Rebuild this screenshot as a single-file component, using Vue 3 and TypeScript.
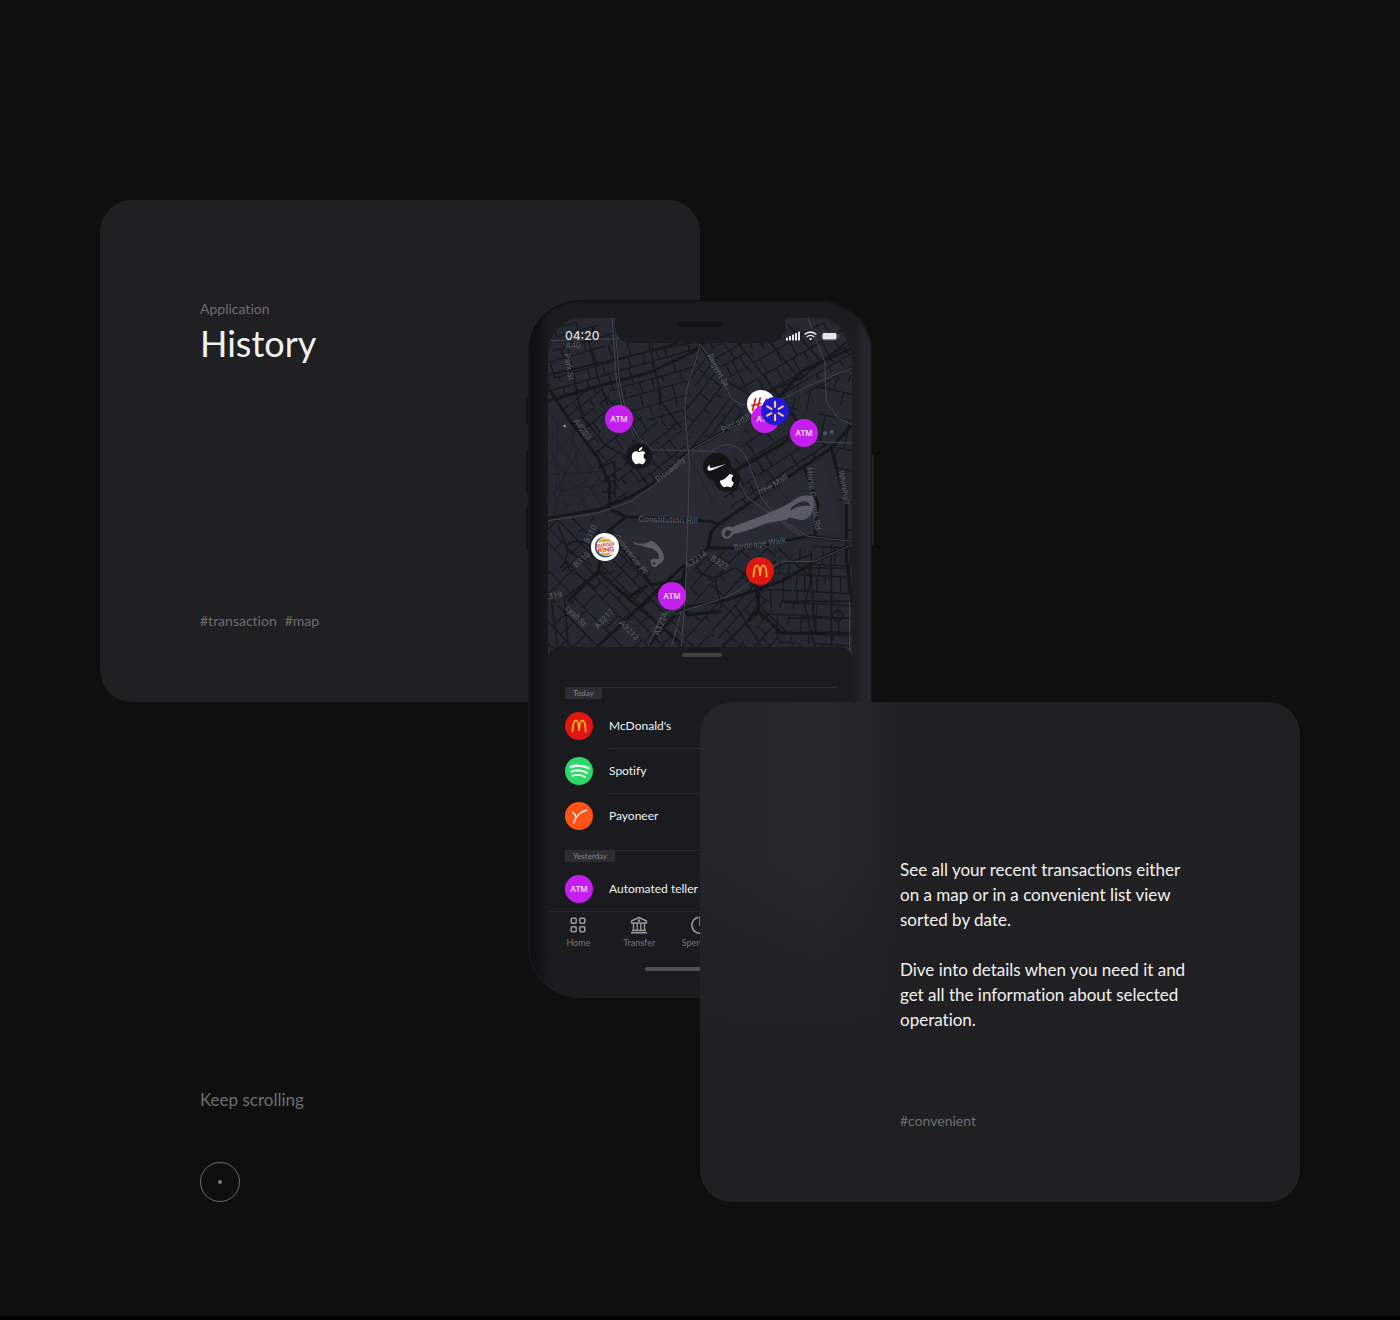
<script setup lang="ts">
interface District {
  id: string
  outline: string
  cx: number
  cy: number
  angle: number
  half: number
  row: number
  block: number
  seed: number
}

interface StreetLabel {
  text: string
  x: number
  y: number
  angle: number
}

interface Pin {
  logo: string
  name: string
  x: number
  y: number
}

interface Group {
  day: string
  items: { logo: string; name: string }[]
}

const districts: District[] = [
  { id: 'mayfair-north', outline: '0,0 460,60 430,160 400,330 220,290 150,200 0,250', cx: 220, cy: 160, angle: -16, half: 300, row: 38, block: 62, seed: 7 },
  { id: 'mayfair-south', outline: '10,250 150,200 230,280 400,330 420,400 300,510 190,570 160,450 90,340', cx: 250, cy: 390, angle: -38, half: 260, row: 36, block: 56, seed: 23 },
  { id: 'mayfair-east', outline: '450,90 560,250 600,300 420,395 405,300 412,200', cx: 500, cy: 260, angle: -52, half: 220, row: 38, block: 70, seed: 41 },
  { id: 'soho', outline: '460,75 912,0 912,170 850,200 700,250 600,250', cx: 690, cy: 140, angle: -30, half: 300, row: 36, block: 50, seed: 59 },
  { id: 'st-james', outline: '600,310 700,250 850,390 560,590 500,500 560,420', cx: 690, cy: 390, angle: -33, half: 240, row: 56, block: 70, seed: 71 },
  { id: 'strand', outline: '700,250 850,190 912,170 912,660 880,600 850,390', cx: 830, cy: 350, angle: 12, half: 340, row: 76, block: 90, seed: 83 },
  { id: 'belgravia', outline: '0,610 130,590 210,640 330,790 400,860 400,990 0,990', cx: 190, cy: 800, angle: 46, half: 320, row: 42, block: 74, seed: 97 },
  { id: 'victoria', outline: '440,740 500,700 690,690 650,880 720,990 410,990 415,880', cx: 550, cy: 850, angle: -48, half: 260, row: 40, block: 76, seed: 113 },
  { id: 'westminster', outline: '680,700 912,670 912,990 700,990 640,860', cx: 790, cy: 840, angle: 3, half: 220, row: 40, block: 54, seed: 131 },
]

/** Seeded generator, so the city always has the same streets. */
function random(seed: number): () => number {
  let state = seed * 2654435761 % 4294967296
  return () => {
    state = (state * 1664525 + 1013904223) % 4294967296
    return state / 4294967296
  }
}

/** Rows of streets with staggered side streets between them. */
function streets(d: District): string {
  const next = random(d.seed)
  const left = d.cx - d.half
  const right = d.cx + d.half
  let path = ''
  let y = d.cy - d.half
  while (y < d.cy + d.half) {
    const depth = d.row * (0.6 + next() * 0.8)
    const gap = next() * d.half
    path += `M${left} ${y.toFixed(1)}H${(left + gap).toFixed(1)}m${(d.block * next()).toFixed(1)} 0H${right}`
    let x = left
    while (x < right) {
      x += d.block * (0.4 + next())
      const reach = next() > 0.25 ? depth : depth * 0.5
      path += `M${x.toFixed(1)} ${y.toFixed(1)}l${(next() * 6 - 3).toFixed(1)} ${reach.toFixed(1)}`
    }
    y += depth
  }
  return path
}

const network = districts.map((d) => ({ ...d, path: streets(d) }))

const labels: StreetLabel[] = [
  { text: 'A40', x: 75, y: 82, angle: -4 },
  { text: 'Park St', x: 64, y: 146, angle: 80 },
  { text: 'A4202', x: 104, y: 334, angle: 55 },
  { text: 'Regent St', x: 510, y: 156, angle: 62 },
  { text: 'Piccadilly', x: 568, y: 312, angle: -27 },
  { text: 'Piccadilly', x: 366, y: 454, angle: -38 },
  { text: 'The Mall', x: 676, y: 500, angle: -32 },
  { text: 'Horse Guards Rd', x: 797, y: 542, angle: 82 },
  { text: 'Whitehall', x: 888, y: 508, angle: 80 },
  { text: 'Constitution Hill', x: 361, y: 605, angle: 2 },
  { text: 'Birdcage Walk', x: 636, y: 677, angle: -8 },
  { text: 'B310', x: 127, y: 648, angle: -62 },
  { text: 'B310', x: 100, y: 724, angle: -42 },
  { text: 'Grosvenor Pl', x: 248, y: 708, angle: 52 },
  { text: 'A3214', x: 444, y: 724, angle: -35 },
  { text: 'B323', x: 515, y: 734, angle: 32 },
  { text: '319', x: 22, y: 832, angle: -8 },
  { text: 'Lyall St', x: 84, y: 894, angle: 46 },
  { text: 'A3217', x: 168, y: 902, angle: -46 },
  { text: 'A3213', x: 244, y: 936, angle: 46 },
  { text: 'A3214', x: 338, y: 918, angle: -68 },
]

const pins: Pin[] = [
  { logo: 'atm', name: 'ATM', x: 71, y: 101 },
  { logo: 'apple', name: 'Apple', x: 91, y: 138 },
  { logo: 'hm', name: 'H&M', x: 213, y: 86 },
  { logo: 'atm', name: 'ATM', x: 217, y: 101 },
  { logo: 'walmart', name: 'Walmart', x: 227, y: 93 },
  { logo: 'atm', name: 'ATM', x: 256, y: 115 },
  { logo: 'apple', name: 'Apple', x: 179, y: 161 },
  { logo: 'nike', name: 'Nike', x: 169, y: 149 },
  { logo: 'burger-king', name: 'Burger King', x: 57, y: 229 },
  { logo: 'mcdonalds', name: "McDonald's", x: 212, y: 253 },
  { logo: 'atm', name: 'ATM', x: 124, y: 278 },
]

const groups: Group[] = [
  {
    day: 'Today',
    items: [
      { logo: 'mcdonalds', name: "McDonald's" },
      { logo: 'spotify', name: 'Spotify' },
      { logo: 'payoneer', name: 'Payoneer' },
    ],
  },
  { day: 'Yesterday', items: [{ logo: 'atm', name: 'Automated teller' }] },
]

const tabs = [
  { icon: 'home', name: 'Home' },
  { icon: 'transfer', name: 'Transfer' },
  { icon: 'spending', name: 'Spending' },
]
</script>

<template>
  <svg class="sprite" aria-hidden="true">
    <symbol id="atm" viewBox="0 0 28 28">
      <circle cx="14" cy="14" r="14" fill="#c51ff0" />
      <text x="14" y="17" text-anchor="middle" font-family="Open Sans, sans-serif" font-size="8" font-weight="600" fill="#fbe6ff">ATM</text>
    </symbol>
    <symbol id="apple" viewBox="0 0 28 28">
      <circle cx="14" cy="14" r="13" fill="#141618" />
      <path
        transform="translate(5.2 5) scale(.72)"
        fill="#fff"
        d="M12.152 6.896c-.948 0-2.415-1.078-3.96-1.04-2.04.027-3.91 1.183-4.961 3.014-2.117 3.675-.546 9.103 1.519 12.09 1.013 1.454 2.208 3.09 3.792 3.039 1.52-.065 2.09-.987 3.935-.987 1.831 0 2.35.987 3.96.948 1.637-.026 2.676-1.48 3.676-2.948 1.156-1.688 1.636-3.325 1.662-3.415-.039-.013-3.182-1.221-3.22-4.857-.026-3.04 2.48-4.494 2.597-4.559-1.429-2.09-3.623-2.324-4.39-2.376-2-.156-3.675 1.09-4.61 1.09zM15.53 3.83c.843-1.012 1.4-2.427 1.245-3.83-1.207.052-2.662.805-3.532 1.818-.78.896-1.454 2.338-1.273 3.714 1.338.104 2.715-.688 3.559-1.701"
      />
    </symbol>
    <symbol id="nike" viewBox="0 0 28 28">
      <circle cx="14" cy="14" r="14" fill="#121416" />
      <path
        transform="translate(4.500 5) scale(.78)"
        fill="#fff"
        d="M24 7.8L6.442 15.276c-1.456.616-2.679.925-3.668.925-1.12 0-1.933-.392-2.437-1.177-.317-.504-.41-1.143-.28-1.918.13-.775.476-1.6 1.036-2.478.467-.71 1.232-1.643 2.297-2.8a6.122 6.122 0 00-.784 1.848c-.28 1.195-.028 2.072.756 2.632.373.261.886.392 1.54.392.522 0 1.11-.084 1.764-.252L24 7.8z"
      />
    </symbol>
    <symbol id="hm" viewBox="0 0 28 28">
      <circle cx="14" cy="14" r="14" fill="#fff" />
      <path
        d="M8.600 8.500 L5.500 20.500 M13.200 8 L10.300 20 M5 15.600 L13.500 13.500 M14.500 19 L19 10.500 L19.500 18 L24 9"
        fill="none"
        stroke="#d3211f"
        stroke-width="1.700"
        stroke-linecap="round"
      />
    </symbol>
    <symbol id="walmart" viewBox="0 0 28 28">
      <circle cx="14" cy="14" r="14" fill="#2119d3" />
      <path
        d="M14 4.800V9.800M14 18.200V23.200M6.200 9.400L10.400 11.900M17.600 16.100L21.800 18.600M21.800 9.400L17.600 11.900M10.400 16.100L6.200 18.600"
        stroke="#f6c68e"
        stroke-width="2.200"
        stroke-linecap="round"
      />
    </symbol>
    <symbol id="burger-king" viewBox="0 0 28 28">
      <circle cx="14" cy="14" r="14" fill="#fff" />
      <path d="M6.800 9.600C8.500 4.800 18.500 3.800 21 8.600Z" fill="#f3a52c" />
      <path d="M8.500 20.500C12 23.500 18 23.300 20.500 19.400Z" fill="#f3a52c" />
      <path d="M14.500 3.800C6 3.800 3.300 10 4 15.500C4.900 21.500 10 25 16 24.300C19.500 23.800 21.400 22 22 20.800C17 24.600 8.500 23 6 17C4.200 12 6.500 5.500 14.500 3.800Z" fill="#1d5aa6" />
      <g transform="rotate(-7 14 14)" fill="#dc2a22" font-weight="900" text-anchor="middle">
        <text x="14.500" y="13.600" font-size="4.600">BURGER</text>
        <text x="14.500" y="19.200" font-size="6.600">KING</text>
      </g>
    </symbol>
    <symbol id="mcdonalds" viewBox="0 0 28 28">
      <circle cx="14" cy="14" r="14" fill="#e01613" />
      <path
        d="M7.500 20.300C7.700 13.500 9 8.300 10.900 8.300C12.700 8.300 13.800 12.500 14.100 18.600C14.400 12.500 15.500 8.300 17.300 8.300C19.200 8.300 20.500 13.500 20.700 20.300"
        fill="none"
        stroke="#f8b522"
        stroke-width="1.800"
      />
    </symbol>
    <symbol id="spotify" viewBox="0 0 28 28">
      <circle cx="14" cy="14" r="14" fill="#2bd868" />
      <g fill="none" stroke="#f2fff6" stroke-linecap="round">
        <path d="M5.600 10C11 8 18.500 8.500 23.600 11.300" stroke-width="2.400" />
        <path d="M6.400 14.600C11 12.900 17.500 13.400 21.800 15.900" stroke-width="2" />
        <path d="M7.200 18.900C11 17.500 16.500 17.900 20.200 20" stroke-width="1.700" />
      </g>
    </symbol>
    <symbol id="payoneer" viewBox="0 0 28 28">
      <circle cx="14" cy="14" r="14" fill="#ff5318" />
      <path
        d="M7.600 10.200C9.300 11.200 10.500 12.800 10.800 15.200M21.300 8.300C15.500 9.400 10.500 14.500 8.700 21"
        fill="none"
        stroke="#fff3ec"
        stroke-width="1.400"
        stroke-linecap="round"
      />
    </symbol>
    <symbol id="home" viewBox="0 0 20 20">
      <g fill="none" stroke="currentColor" stroke-width="1.500">
        <rect x="3.200" y="3.200" width="5" height="5" rx="1" />
        <rect x="11.800" y="3.200" width="5" height="5" rx="1" />
        <rect x="3.200" y="11.800" width="5" height="5" rx="1" />
        <rect x="11.800" y="11.800" width="5" height="5" rx="1" />
      </g>
    </symbol>
    <symbol id="transfer" viewBox="0 0 20 20">
      <g fill="none" stroke="currentColor" stroke-width="1.400" stroke-linejoin="round">
        <path d="M10 2.500L17.500 6V8H2.500V6Z" />
        <path d="M4.500 8V15.500M8.200 8V15.500M11.800 8V15.500M15.500 8V15.500M3 15.500H17M2 17.800H18" />
        <circle cx="10" cy="5.600" r=".6" />
      </g>
    </symbol>
    <symbol id="spending" viewBox="0 0 20 20">
      <path
        d="M8.500 2.300A8 8 0 1 0 17.700 11.500M10 2V10H18A8 8 0 0 0 10 2Z"
        fill="none"
        stroke="currentColor"
        stroke-width="1.500"
      />
    </symbol>
  </svg>

  <main class="page">
    <section class="card intro">
      <header>
        <p class="muted">Application</p>
        <h1>History</h1>
      </header>
      <p class="tags muted"><span>#transaction</span><span>#map</span></p>
    </section>

    <div class="phone">
      <span class="key mute"></span>
      <span class="key up"></span>
      <span class="key down"></span>
      <span class="key power"></span>
      <div class="screen">
        <div class="map">
          <svg class="city" viewBox="0 0 912 1020" aria-hidden="true">
            <defs>
              <clipPath v-for="d in network" :id="d.id" :key="d.id"><polygon :points="d.outline" /></clipPath>
            </defs>
            <rect width="912" height="1020" fill="#262931" />
            <path d="M235 592L420 402L600 305L540 420L600 560L490 620ZM190 630L480 615L480 690L400 780L280 790ZM530 625L830 420L880 640L520 690Z" fill="#282b33" />

            <g v-for="d in network" :key="d.id" :clip-path="`url(#${d.id})`">
              <path :d="d.path" :transform="`rotate(${d.angle} ${d.cx} ${d.cy})`" class="minor" />
            </g>

            <!-- footpaths across the parks -->
            <path
              class="foot"
              d="M0 280L170 500M0 330L160 560M0 400L130 580M0 470L160 460M0 520L170 500M0 560L120 350M20 590L90 300M0 440L90 330M0 380L60 290M40 585L150 430M80 580L160 470M0 350L60 590M30 300L20 590M0 430L170 540M70 330L110 580M0 500L60 520L90 500L120 530M20 545A40 14 0 1 0 100 545A40 14 0 1 0 20 545"
            />
            <path
              class="foot"
              d="M420 405L500 560M450 400L500 520M480 700L560 620M600 330L620 420M640 440L760 600M560 590L520 630"
            />

            <g class="middle">
              <path d="M0 170L90 150L260 110L450 70M140 30L120 60L150 180L180 260M300 60L340 240M60 90L100 290L170 380L240 420M450 75L520 180L620 240L760 180L912 60" />
              <path d="M200 0L212 180L240 330L300 400M330 240L400 330M560 60L660 190L760 330L790 390M640 40L760 190M720 20L820 130" />
              <path d="M30 620L60 700L130 740M50 690A50 50 0 0 1 130 690M60 700A48 48 0 0 0 90 770L140 810M40 760L200 640M50 840L140 770L200 760M50 840L60 985M10 850L30 990" />
              <path d="M150 450L200 430L200 540M165 490H200M160 520L205 525M250 430L300 500M290 400L330 450" />
              <path d="M440 760L500 780L560 750L620 790L630 860L590 920L520 985M500 780L520 870M620 790L700 740L790 710M560 860L640 985M690 690L790 780L800 940" />
              <path d="M790 700V780L770 860L800 985M850 680V985M640 870L720 945M700 850H912M720 900H912M760 750H890" />
              <circle cx="869" cy="893" r="15" />
            </g>

            <g class="main">
              <path d="M0 250L130 210L300 165L440 100L470 70L640 0" />
              <path d="M5 215L60 300L150 420L185 500L185 570" />
              <path d="M0 600L150 575L240 540L310 500L420 400L600 300L700 230L760 160L912 90" />
              <path d="M180 570L235 596L490 610L510 620L560 585L850 390L912 320" />
              <path d="M235 596L180 640L150 760L240 840L410 985M150 760L60 850M180 640L280 760L310 800L400 790L420 740L480 690L490 640L510 620" />
              <path d="M490 640L480 690L600 690L780 655L912 670M850 390L870 470L895 560L895 720L912 850" />
              <path d="M240 840L300 800M150 985L410 740M300 985L400 870L540 845L700 790L820 720L912 680M630 800L632 880L600 910M632 880L700 945H912" />
              <path d="M410 740L400 870L420 890L520 880M560 460L700 380L720 360M800 655L810 560L770 450" />
            </g>

            <g class="rail">
              <path d="M192 0L205 180L225 280L260 360L310 395L500 400M200 0L213 180L233 280L268 355L310 390" />
              <path d="M455 78C440 160 405 200 412 300L424 430L420 600L412 830L400 985" />
              <path d="M455 78L500 140L550 240L580 260L700 245L790 200L912 150M780 0L830 130L835 250L870 300L912 320" />
              <path d="M0 608L150 585L250 550L320 500L430 395L530 340M490 400C530 370 570 370 600 430L640 540L690 600L780 655L912 670M540 440L600 540L670 590L760 655M780 370L912 375" />
              <path d="M0 68L215 62M380 890L430 870L500 850L570 820L620 780L700 730H800L912 680M300 985L340 890L400 870M370 985L400 880M905 850V1020" />
            </g>

            <g fill="#595b66">
              <path
                fill-rule="evenodd"
                d="M522 652C516 636 530 624 552 627L650 590C690 572 712 566 738 545C760 528 794 528 797 545C800 575 788 608 758 606C735 604 722 592 718 604C690 612 660 612 640 622C610 634 580 645 556 648C548 664 526 668 522 652ZM530 650C534 662 546 654 550 642C542 632 528 638 530 650ZM728 578C742 566 764 562 788 564C784 550 766 546 752 554C738 560 724 572 728 578Z"
              />
              <path
                fill-rule="evenodd"
                d="M252 671C275 680 296 678 308 668C326 672 348 700 348 720C346 736 332 736 326 746C314 750 306 740 308 726C316 720 324 722 332 724C338 706 318 690 302 690C290 688 282 684 278 682C268 682 258 678 252 671ZM314 732C312 742 322 742 324 734Z"
              />
            </g>
            <circle cx="50" cy="324" r="4" fill="#858893" />
            <circle cx="831" cy="346" r="6" fill="#555863" />
            <circle cx="851" cy="342" r="6" fill="#555863" />

            <g class="labels">
              <text
                v-for="l in labels"
                :key="`${l.text}-${l.x}`"
                :x="l.x"
                :y="l.y + 9"
                :transform="`rotate(${l.angle} ${l.x} ${l.y})`"
              >{{ l.text }}</text>
            </g>
          </svg>

          <button
            v-for="p in pins"
            :key="`${p.logo}-${p.x}`"
            class="pin"
            type="button"
            :aria-label="p.name"
            :style="{ left: `${p.x}px`, top: `${p.y}px` }"
          >
            <svg class="logo"><use :href="`#${p.logo}`" /></svg>
          </button>

          <div class="notch"><span class="speaker"></span></div>
          <div class="status">
            <time>04:20</time>
            <svg class="signals" viewBox="0 0 54 12" aria-hidden="true">
              <g fill="#e6e7ea">
                <rect x="0" y="7.500" width="2" height="3" rx=".6" />
                <rect x="3" y="6" width="2" height="4.500" rx=".6" />
                <rect x="6" y="4.500" width="2" height="6" rx=".6" />
                <rect x="9" y="3" width="2" height="7.500" rx=".6" />
                <rect x="12" y="1.500" width="2" height="9" rx=".6" />
                <rect x="36.500" y="3" width="14" height="6.500" rx="1.500" />
              </g>
              <g fill="none" stroke="#e6e7ea" stroke-width="1.600">
                <path d="M18.600 4.500A8.600 8.600 0 0 1 30.400 4.500" />
                <path d="M20.900 6.900A5.200 5.200 0 0 1 28.100 6.900" />
              </g>
              <path d="M22.900 8.800A2.400 2.400 0 0 1 26.100 8.800L24.500 10.600Z" fill="#e6e7ea" />
              <rect x="35.500" y="2" width="16" height="8.500" rx="2.500" fill="none" stroke="#3c3e46" />
              <path d="M52.700 5V7.500" stroke="#5c5e66" />
            </svg>
          </div>
        </div>

        <div class="sheet">
          <span class="handle"></span>
          <section v-for="g in groups" :key="g.day" class="group">
            <h2>{{ g.day }}</h2>
            <ul>
              <li v-for="i in g.items" :key="i.name">
                <svg class="logo" aria-hidden="true"><use :href="`#${i.logo}`" /></svg>
                <span class="name">{{ i.name }}</span>
              </li>
            </ul>
          </section>
        </div>

        <nav class="tabs">
          <button v-for="t in tabs" :key="t.name" type="button">
            <svg aria-hidden="true"><use :href="`#${t.icon}`" /></svg>
            <span>{{ t.name }}</span>
          </button>
        </nav>
        <span class="indicator"></span>
      </div>
    </div>

    <section class="card about">
      <div class="copy">
        <p>See all your recent transactions either on a map or in a convenient list view sorted by date.</p>
        <p>Dive into details when you need it and get all the information about selected operation.</p>
      </div>
      <p class="tags muted"><span>#convenient</span></p>
    </section>

    <div class="more">
      <p>Keep scrolling</p>
      <button type="button" aria-label="Keep scrolling"><span></span></button>
    </div>
  </main>
</template>

<style>
body {
  margin: 0;
  background: #000;
}
</style>

<style scoped>
.sprite {
  display: none;
}

.page {
  box-sizing: border-box;
  display: grid;
  grid-template-columns: 1fr 1fr;
  grid-template-rows: auto auto;
  min-height: 1316px;
  align-content: start;
  padding: 200px 100px 114px;
  background: #0f0f0f;
  color: #f2f2f3;
  font-family: Lato, 'Open Sans', sans-serif;
  font-size: 17px;
  font-variant-ligatures: none;
}

p,
h1,
h2,
ul {
  margin: 0;
  padding: 0;
}

button {
  padding: 0;
  border: 0;
  background: none;
  color: inherit;
  font: inherit;
  cursor: pointer;
}

.muted {
  color: #6d6d70;
  font-size: 14px;
  line-height: 18px;
}

.card {
  box-sizing: border-box;
  display: flex;
  flex-direction: column;
  justify-content: space-between;
  border-radius: 32px;
  background: #202022;
}

.intro {
  grid-area: 1 / 1;
  min-height: 502px;
  padding: 100px 100px 72px;
}

h1 {
  font-size: 36px;
  font-weight: 400;
  line-height: 50px;
}

.tags {
  display: flex;
  gap: 8px;
}

.about {
  grid-area: 2 / 2;
  z-index: 1;
  min-height: 500px;
  padding: 155px 100px 72px 200px;
  background:
    linear-gradient(to bottom, transparent 160px, #202022 340px),
    linear-gradient(to right, #242528, #27282c 120px, #242528 172px, #202022 200px);
}

.copy {
  display: flex;
  flex-direction: column;
  gap: 25px;
  max-width: 290px;
  line-height: 25px;
}

.more {
  grid-area: 2 / 1;
  align-self: end;
  display: flex;
  flex-direction: column;
  align-items: flex-start;
  gap: 50px;
  padding-left: 100px;
  color: #6d6d70;
  line-height: 25px;
}

.more button {
  display: grid;
  place-items: center;
  width: 40px;
  height: 40px;
  border: 1px solid #6a6a6c;
  border-radius: 50%;
}

.more button span {
  width: 4px;
  height: 4px;
  border-radius: 50%;
  background: #7c7c7e;
}

.phone {
  grid-area: 1 / 1 / 3 / 3;
  justify-self: center;
  align-self: start;
  position: relative;
  box-sizing: border-box;
  width: 344px;
  margin-top: 100px;
  padding: 18px 20px;
  border-radius: 52px;
  background:
    linear-gradient(to right, #242426 0, #111113 3px, #101113 8px, #17181c 18px, transparent 24px),
    linear-gradient(to left, #1b1b1d 0, #2b2c2f 2px, #242528 6px, #27282b 8px, #1f2024 14px, transparent 24px),
    #1a1c20;
  box-shadow: inset 0 1px 3px #0c0c0e, inset 0 -2px 2px #222224;
}

.key {
  position: absolute;
  width: 2px;
  background: #131315;
}

.mute {
  top: 98px;
  left: -2px;
  height: 26px;
}

.up {
  top: 150px;
  left: -2px;
  height: 43px;
}

.down {
  top: 207px;
  left: -2px;
  height: 43px;
}

.power {
  top: 155px;
  right: -2px;
  height: 90px;
  background: #232325;
}

.screen {
  display: flex;
  flex-direction: column;
  overflow: hidden;
  border-radius: 34px;
  background: #1a1b1f;
}

.map {
  position: relative;
  height: 338px;
  overflow: hidden;
}

.city {
  display: block;
  width: 304px;
  height: 340px;
}

.minor,
.middle,
.main,
.rail,
.foot {
  fill: none;
  stroke: #17191e;
}

.minor {
  stroke-width: 4;
}

.foot {
  stroke: #1e2027;
  stroke-width: 2;
}

.middle {
  stroke-width: 5;
}

.main {
  stroke: #15171b;
  stroke-width: 9;
  stroke-linejoin: round;
}

.rail {
  stroke: #424550;
  stroke-width: 3;
}

.labels {
  fill: #5a5d68;
  font-family: Roboto, sans-serif;
  font-size: 25px;
  text-anchor: middle;
}

.logo {
  display: block;
  width: 28px;
  height: 28px;
}

.pin {
  position: absolute;
  margin: -14px 0 0 -14px;
}

.notch {
  position: absolute;
  top: 0;
  left: 67px;
  display: flex;
  justify-content: center;
  width: 170px;
  height: 25px;
  border-radius: 0 0 16px 16px;
  background: #1a1c21;
}

.speaker {
  width: 46px;
  height: 5px;
  margin-top: 4px;
  border-radius: 3px;
  background: #111215;
}

.status {
  position: absolute;
  top: 10px;
  right: 12px;
  left: 17px;
  display: flex;
  align-items: center;
  justify-content: space-between;
  color: #dcdde1;
  font: 500 12px/16px Inter, sans-serif;
}

.signals {
  width: 54px;
  height: 12px;
}

.sheet {
  position: relative;
  display: flex;
  flex-direction: column;
  margin-top: -9px;
  padding: 6px 14px 0 17px;
  border-radius: 12px 12px 0 0;
  background: #1a1b1f;
}

.handle {
  align-self: center;
  width: 40px;
  height: 4px;
  margin-bottom: 30px;
  border-radius: 2px;
  background: #414246;
}

.group {
  border-top: 1px solid #2b2c31;
}

.group + .group {
  margin-top: 12px;
}

h2 {
  width: max-content;
  padding: 0 8px;
  margin-bottom: 4px;
  background: #2b2d33;
  color: #85868c;
  font-size: 8px;
  font-weight: 400;
  line-height: 11px;
}

ul {
  list-style: none;
}

li {
  display: flex;
  gap: 16px;
  align-items: center;
  height: 45px;
}

.name {
  flex: 1;
  box-sizing: border-box;
  height: 45px;
  color: #f0f0f2;
  font-size: 12px;
  line-height: 45px;
}

li + li .name {
  border-top: 1px solid #2b2c31;
  line-height: 44px;
}

.tabs {
  display: grid;
  grid-template-columns: repeat(5, 1fr);
  border-top: 1px solid #25272b;
  color: #9a9ba0;
}

.tabs button {
  display: flex;
  flex-direction: column;
  gap: 1px;
  align-items: center;
  padding-top: 3px;
}

.tabs svg {
  width: 20px;
  height: 20px;
}

.tabs span {
  color: #75767c;
  font-size: 9px;
  line-height: 14px;
}

.indicator {
  align-self: center;
  width: 110px;
  height: 4px;
  margin: 17px 0 9px;
  border-radius: 2px;
  background: #515257;
}
</style>
